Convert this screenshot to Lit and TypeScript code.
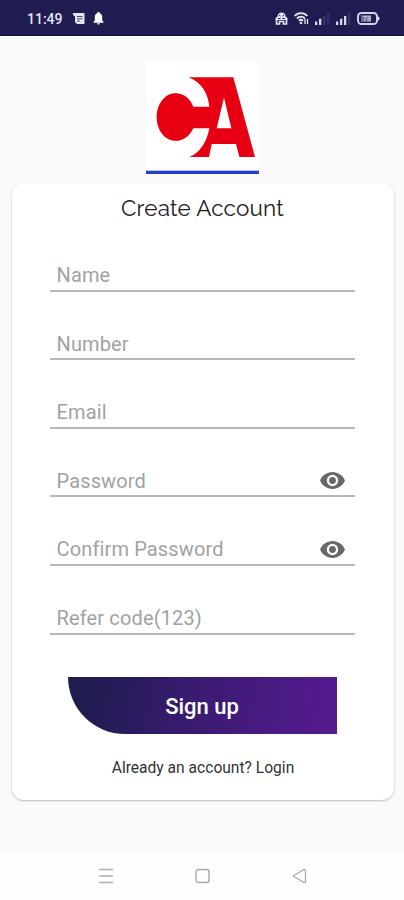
import { LitElement, html, svg, css } from "lit";
import { customElement } from "lit/decorators.js";

const eye = html`<svg class="eye" viewBox="1 4.5 22 15" width="25" height="17">
  <path fill="#686868" fill-rule="evenodd" d="M12 4.5C7 4.5 2.73 7.61 1 12c1.73 4.39 6 7.5 11 7.5s9.27-3.11 11-7.5c-1.73-4.39-6-7.5-11-7.5zM12 17a5 5 0 1 1 0-10 5 5 0 0 1 0 10zm0-8a3 3 0 1 0 0 6 3 3 0 0 0 0-6z"/>
</svg>`;

const signal = (lit: number) => html`<svg width="15" height="12" viewBox="0 0 15 12">
  ${[0, 1, 2, 3].map((i) => svg`<rect x=${i * 4} y=${8.5 - i * 2.8} width="2.3" height=${3.5 + i * 2.8}
    rx=".5" fill=${i < lit ? "#dddcec" : "#34326a"}/>`)}
</svg>`;

const fields = [
  { label: "Name", secret: false },
  { label: "Number", secret: false },
  { label: "Email", secret: false },
  { label: "Password", secret: true },
  { label: "Confirm Password", secret: true },
  { label: "Refer code(123)", secret: false },
];

@customElement("app-root")
export class AppRoot extends LitElement {
  static styles = css`
    :host { display: flex; flex-direction: column; width: 404px; height: 900px; overflow: hidden;
      background: #fafafa; font-family: Roboto, "Liberation Sans", sans-serif; }
    svg { display: block; flex: none; }
    .status { height: 36px; flex: none; box-sizing: border-box; background: #1e1c50;
      border-bottom: 1px solid #12103f; display: flex; align-items: center;
      padding: 2px 24px 0 27px; color: #e6e5f2; }
    .time { font-size: 14px; font-weight: 500; width: 46px; }
    .left { display: flex; align-items: center; gap: 8px; }
    .right { display: flex; align-items: center; gap: 6px; margin-left: auto; }
    .main { flex: 1; display: flex; flex-direction: column; align-items: center; }
    .logo { margin-top: 26px; width: 113px; height: 112px; flex: none; }
    .card { box-sizing: border-box; width: 382px; height: 617px; margin: 9px 0 0 1px; background: #fff;
      border-radius: 12px; box-shadow: 0 1px 2px rgba(0,0,0,.24), 0 0 3px rgba(0,0,0,.05);
      display: flex; flex-direction: column; align-items: center; }
    h1 { margin: 10px 0 0; font: 400 22.5px/30px Raleway, Lato, sans-serif;
      color: #222; letter-spacing: .17px; white-space: nowrap; }
    .fields { width: 305px; margin-right: 1px; }
    .field { height: 68.6px; box-sizing: border-box; display: flex; align-items: flex-end; }
    .line { flex: 1; height: 35px; box-sizing: border-box; border-bottom: 2px solid #b8b8b8;
      display: flex; align-items: center; justify-content: space-between; padding: 4px 10px 0 7px;
      font-size: 20px; color: #a2a2a2; letter-spacing: .14px; }
    .button { width: 269px; height: 57px; margin: 42px 1px 0 0; flex: none; border: 0; padding: 2px 0 0;
      border-radius: 0 0 0 57px; background: linear-gradient(100deg, #1f1c50 8%, #391b70 45%, #551a8f 98%);
      color: #fff; font: 500 22px Roboto, sans-serif; }
    .login { margin: 24px 0 0 1px; font-size: 15.6px; line-height: 20px; color: #333; white-space: nowrap; }
    .nav { height: 48px; flex: none; background: #fefefe; display: flex; justify-content: center;
      align-items: center; gap: 82px; padding-left: 2px; }
  `;

  render() {
    return html`
      <header class="status">
        <span class="time">11:49</span>
        <div class="left">
          <svg width="12" height="12" viewBox="0 0 12 12"><path fill="#e6e5f2" d="M0 0h11.5v11H4L2 9V3.500L0 2z"/><path stroke="#1e1c50" stroke-width=".8" d="M4 3.500h5.500M4 5.800h5.500M4 8h3"/></svg>
          <svg width="11" height="13" viewBox="0 0 11 13"><path fill="#fff" d="M5.500 0c.8 0 1.200.5 1.200 1.200C8.500 1.800 9.200 3.300 9.200 5v3.300L10.500 10v.7H.5V10l1.300-1.700V5c0-1.700.7-3.200 2.500-3.800C4.300.5 4.700 0 5.500 0zM4 11.300h3C7 13 4 13 4 11.300z"/></svg>
        </div>
        <div class="right">
          <svg width="13" height="13" viewBox="0 0 13 13"><path fill="#e6e5f2" d="M2.500 4.500C2.500-.8 10.500-.8 10.500 4.500L12.500 6v2H.5V6z"/><path fill="none" stroke="#e6e5f2" stroke-width="1.700" d="M1.500 8v4h3V9.500h4V12h3V8"/><path stroke="#1e1c50" d="M4 3l1.500 1M7.500 4L9 3M3 6.500h2.500M7.500 6.500H10"/></svg>
          <svg width="15" height="13" viewBox="0 0 15 13"><path fill="none" stroke="#e6e5f2" stroke-width="1.900" d="M.7 4C4 .2 10 .2 13.300 4M3 6.500c2.200-2.500 6-2.500 8 0M5 8.800c1.200-1.200 2.800-1.200 4 0"/><circle cx="7" cy="11" r="1.300" fill="#e6e5f2"/><path stroke="#e6e5f2" stroke-width="1.300" d="M11 7v5M13.500 7v5"/></svg>
          ${signal(2)}
          ${signal(3)}
          <svg width="23" height="13" viewBox="0 0 23 13"><rect x="1" y="1" width="19" height="11" rx="3.500" fill="none" stroke="#d5d4e4" stroke-width="1.900"/><rect x="4" y="3" width="10" height="7" fill="#6b6998"/><path fill="#e6e5f2" d="M20.500 4q2 1 2 2.500t-2 2.500z"/><text x="5.800" y="9.300" font-size="7.500" font-weight="500" fill="#d5d4e4">78</text></svg>
        </div>
      </header>
      <main class="main">
        <svg class="logo" viewBox="48 36 339 337" preserveAspectRatio="none">
          <rect x="48" y="36" width="339" height="337" fill="#fff"/>
          <path fill="#e60012" fill-rule="evenodd" d="M176 82H310L375 322H328L318 283H245L237 322H178Q226 300 238 235H190C177 260 160 273 137 273C105 273 80 242 80 202S105 130 137 130C160 130 180 145 190 171H238C234 130 216 99 176 82ZM282 143L260 235H304Z"/>
          <rect x="48" y="363" width="339" height="10" fill="#263fc9"/>
        </svg>
        <section class="card">
          <h1>Create Account</h1>
          <div class="fields">
            ${fields.map((f) => html`<div class="field"><div class="line"><span>${f.label}</span>${f.secret ? eye : ""}</div></div>`)}
          </div>
          <button class="button">Sign up</button>
          <div class="login">Already an account? Login</div>
        </section>
      </main>
      <nav class="nav">
        <svg width="14" height="16" viewBox="0 0 14 16"><path stroke="#b0b0b0" stroke-width="1.400" d="M0 1.500h14M0 8h14M0 14.500h14"/></svg>
        <svg width="15" height="16" viewBox="0 0 15 16"><rect x="1" y="1.500" width="13" height="13" rx="2.500" fill="none" stroke="#aaa" stroke-width="1.400"/></svg>
        <svg width="15" height="16" viewBox="0 0 15 16"><path fill="none" stroke="#aaa" stroke-width="1.300" stroke-linejoin="round" d="M1 8L11.500 1.700Q13.500 1 13.500 3v10q0 2-2 1.300z"/></svg>
      </nav>
    `;
  }
}
